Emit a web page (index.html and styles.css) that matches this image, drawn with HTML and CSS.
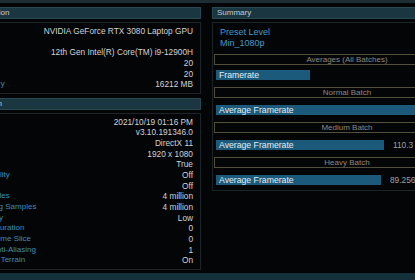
FILE: index.html
```html
<!DOCTYPE html>
<html lang="en">
<head>
  <meta charset="UTF-8">
  <meta name="viewport" content="width=device-width, initial-scale=1.0">
  <title>Benchmark Results</title>
  <link rel="stylesheet" href="styles.css">
</head>
<body>
  <div class="top-strip"></div>

  <main class="screen">
    <!-- Left column: configuration + test info -->
    <section class="panel panel-config">
      <div class="panel-head">Test Configuration</div>
      <div class="panel-box">
        <div class="row"><span class="label">GPU</span><span class="value">NVIDIA GeForce RTX 3080 Laptop GPU</span></div>
        <div class="row"><span class="label">Driver</span><span class="value"></span></div>
        <div class="row"><span class="label">CPU</span><span class="value">12th Gen Intel(R) Core(TM) i9-12900H</span></div>
        <div class="row"><span class="label">Cores</span><span class="value">20</span></div>
        <div class="row"><span class="label">Threads</span><span class="value">20</span></div>
        <div class="row"><span class="label">System Memory</span><span class="value">16212 MB</span></div>
      </div>

      <div class="panel-head">Test Information</div>
      <div class="panel-box">
        <div class="row"><span class="label">Date</span><span class="value">2021/10/19 01:16 PM</span></div>
        <div class="row"><span class="label">Version</span><span class="value">v3.10.191346.0</span></div>
        <div class="row"><span class="label">API</span><span class="value">DirectX 11</span></div>
        <div class="row"><span class="label">Resolution</span><span class="value">1920 x 1080</span></div>
        <div class="row"><span class="label">Fullscreen</span><span class="value">True</span></div>
        <div class="row"><span class="label">PointLight Quality</span><span class="value">Off</span></div>
        <div class="row"><span class="label">Glare Quality</span><span class="value">Off</span></div>
        <div class="row"><span class="label">Shading Samples</span><span class="value">4 million</span></div>
        <div class="row"><span class="label">Terrain Shading Samples</span><span class="value">4 million</span></div>
        <div class="row"><span class="label">Shadow Quality</span><span class="value">Low</span></div>
        <div class="row"><span class="label">Temporal AA Duration</span><span class="value">0</span></div>
        <div class="row"><span class="label">Temporal AA Time Slice</span><span class="value">0</span></div>
        <div class="row"><span class="label">Multisample Anti-Aliasing</span><span class="value">1</span></div>
        <div class="row"><span class="label">Half-resolution Terrain</span><span class="value">On</span></div>
      </div>
    </section>

    <!-- Right column: summary -->
    <section class="panel panel-summary">
      <div class="panel-head">Summary</div>
      <div class="panel-box summary-box">
        <div class="preset">Preset Level</div>
        <div class="preset">Min_1080p</div>

        <div class="batch-head first">Averages (All Batches)</div>
        <div class="bar-row tight">
          <div class="bar" style="width: 94px">Framerate</div>
        </div>

        <div class="batch-head">Normal Batch</div>
        <div class="bar-row">
          <div class="bar" style="width: 230px">Average Framerate</div>
          <span class="bar-value">131.8</span>
        </div>

        <div class="batch-head">Medium Batch</div>
        <div class="bar-row">
          <div class="bar" style="width: 168px">Average Framerate</div>
          <span class="bar-value">110.3</span>
        </div>

        <div class="batch-head">Heavy Batch</div>
        <div class="bar-row">
          <div class="bar" style="width: 165px">Average Framerate</div>
          <span class="bar-value">89.256</span>
        </div>
      </div>
    </section>
  </main>

  <div class="bottom-strip"></div>
</body>
</html>
```

FILE: styles.css
```css
body {
  margin: 0;
  padding: 0;
  width: 415px;
  height: 280px;
  overflow: hidden;
  background-color: #030507;
  color: #d0d3d6;
  font-family: 'Liberation Sans', Arial, sans-serif;
}

.top-strip {
  height: 3px;
  background-color: #1c2e34;
}

.bottom-strip {
  height: 7px;
  background-color: #15323c;
}

.screen {
  display: flex;
  gap: 11px;
  height: 266px;
  padding-top: 4px;
  margin-left: -60px;
}

/* Panels */
.panel {
  display: flex;
  flex-direction: column;
  flex-shrink: 0;
}

.panel-config {
  width: 261px;
}

.panel-summary {
  width: 270px;
}

.panel-head {
  height: 10px;
  line-height: 10px;
  padding-left: 4px;
  background-color: #1a3741;
  border: 1px solid #2a4852;
  color: #c3ccd0;
  font-size: 8px;
  white-space: nowrap;
}

.panel-box {
  margin-top: 3px;
  padding: 3px 7px 3px 6px;
  border: 1px solid #1d2428;
}

.panel-box + .panel-head {
  margin-top: 4px;
}

.row {
  display: flex;
  justify-content: space-between;
  height: 10.65px;
  line-height: 10.65px;
  white-space: nowrap;
}

.label {
  color: #3f8db5;
  font-size: 8px;
}

.value {
  color: #d2d4d6;
  font-size: 8.3px;
}

/* Summary */
.summary-box {
  padding: 4px 0 5px 0;
}

.preset {
  height: 10.65px;
  line-height: 10.65px;
  padding-left: 7px;
  color: #4799c4;
  font-size: 9px;
}

.batch-head {
  height: 9px;
  line-height: 9px;
  margin: 7px 1px 0 1px;
  border: 1px solid #524e3a;
  color: #8b8a84;
  font-size: 8px;
  text-align: center;
  white-space: nowrap;
}

.batch-head.first {
  margin-top: 6px;
}

.bar-row {
  display: flex;
  align-items: center;
  margin: 7px 0 0 3px;
  white-space: nowrap;
}

.bar-row.tight {
  margin-top: 5px;
}

.bar {
  flex-shrink: 0;
  height: 10px;
  line-height: 10px;
  padding-left: 3px;
  box-sizing: border-box;
  background-color: #1b5a7b;
  color: #e6edf1;
  font-size: 8.7px;
}

.bar-value {
  margin-left: 9px;
  color: #a0a2a3;
  font-size: 8.3px;
}
```
